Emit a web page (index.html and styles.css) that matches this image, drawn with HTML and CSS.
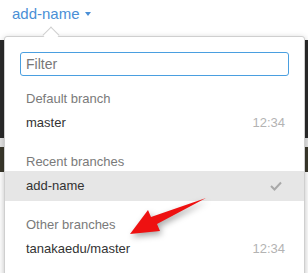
FILE: index.html
```html
<!DOCTYPE html>
<html lang="en">
<head>
  <meta charset="UTF-8">
  <meta name="viewport" content="width=device-width, initial-scale=1.0">
  <title>Branch switcher</title>
  <link rel="stylesheet" href="styles.css">
</head>
<body>
  <div class="page">
    <div class="topbar">
      <span class="branch-btn">add-name <span class="caret"></span></span>
    </div>

    <!-- page content behind the dropdown -->
    <div class="backdrop">
      <div class="dark-band"></div>
      <div class="light-gap"></div>
      <div class="photo-band"></div>
    </div>

    <div class="dropdown">
      <div class="filter">
        <input type="text" placeholder="Filter">
      </div>

      <div class="section">
        <div class="section-title">Default branch</div>
        <div class="item">
          <span>master</span>
          <span class="time">12:34</span>
        </div>
      </div>

      <div class="section">
        <div class="section-title">Recent branches</div>
        <div class="item current">
          <span>add-name</span>
          <svg class="check" width="12" height="10" viewBox="0 0 12 10">
            <polyline points="1,5 4.5,8.5 11,1.5" fill="none" stroke="#a8a8a8" stroke-width="2"/>
          </svg>
        </div>
      </div>

      <div class="section">
        <div class="section-title">Other branches</div>
        <div class="item">
          <span>tanakaedu/master</span>
          <span class="time">12:34</span>
        </div>
      </div>
    </div>

    <!-- red annotation arrow -->
    <svg class="annotation" width="308" height="273" viewBox="0 0 308 273">
      <polygon points="130,234 148,210 151,217 206,198 157,224 160,231" fill="#ee1111"/>
    </svg>
  </div>
</body>
</html>
```

FILE: styles.css
```css
body {
  margin: 0;
  font-family: "Liberation Sans", Arial, sans-serif;
  background: #fff;
}
.page {
  position: relative;
  width: 308px;
  height: 273px;
  overflow: hidden;
}
.topbar {
  height: 40px;
  padding: 5px 0 0 12px;
  box-sizing: border-box;
}
.branch-btn {
  font-size: 15px;
  line-height: 18px;
  color: #4a8fd6;
}
.caret {
  display: inline-block;
  width: 0;
  height: 0;
  margin-left: 1px;
  border-left: 3px solid transparent;
  border-right: 3px solid transparent;
  border-top: 4px solid #4a8fd6;
  vertical-align: 3px;
}
.dark-band {
  height: 98px;
  background: #2b2b2b;
}
.light-gap {
  height: 9px;
  background: #e4e4e4;
}
.photo-band {
  height: 25px;
  background: #3b392c;
}
.dropdown {
  position: absolute;
  top: 36px;
  left: 4px;
  width: 301px;
  height: 260px;
  box-sizing: border-box;
  background: #fff;
  border: 1px solid #cfcfcf;
  border-radius: 3px;
  box-shadow: 0 2px 6px rgba(0, 0, 0, 0.25);
}
.dropdown::before {
  content: "";
  position: absolute;
  top: -8px;
  left: 40px;
  width: 11px;
  height: 11px;
  background: #fff;
  border-top: 1px solid #cfcfcf;
  border-left: 1px solid #cfcfcf;
  transform: rotate(45deg);
}
.filter {
  padding: 15px 15px 15px 15px;
}
.filter input {
  display: block;
  width: 100%;
  height: 24px;
  box-sizing: border-box;
  border: 1px solid #4a9fe0;
  border-radius: 3px;
  padding: 0 5px;
  font-family: "Liberation Sans", Arial, sans-serif;
  font-size: 14px;
  outline: none;
}
.filter input::placeholder {
  color: #777;
}
.section + .section {
  margin-top: 16px;
}
.section-title {
  padding: 0 21px;
  margin-bottom: 1px;
  font-size: 13px;
  line-height: 16px;
  color: #7a7a7a;
}
.item {
  display: flex;
  justify-content: space-between;
  align-items: center;
  padding: 7px 19px 7px 21px;
  font-size: 13px;
  line-height: 16px;
  color: #333;
}
.item.current {
  background: #e6e6e6;
  padding-right: 22px;
}
.time {
  color: #b3b3b3;
}
.annotation {
  position: absolute;
  top: 0;
  left: 0;
  pointer-events: none;
  filter: drop-shadow(2px 3px 3px rgba(0, 0, 0, 0.35));
}
```
